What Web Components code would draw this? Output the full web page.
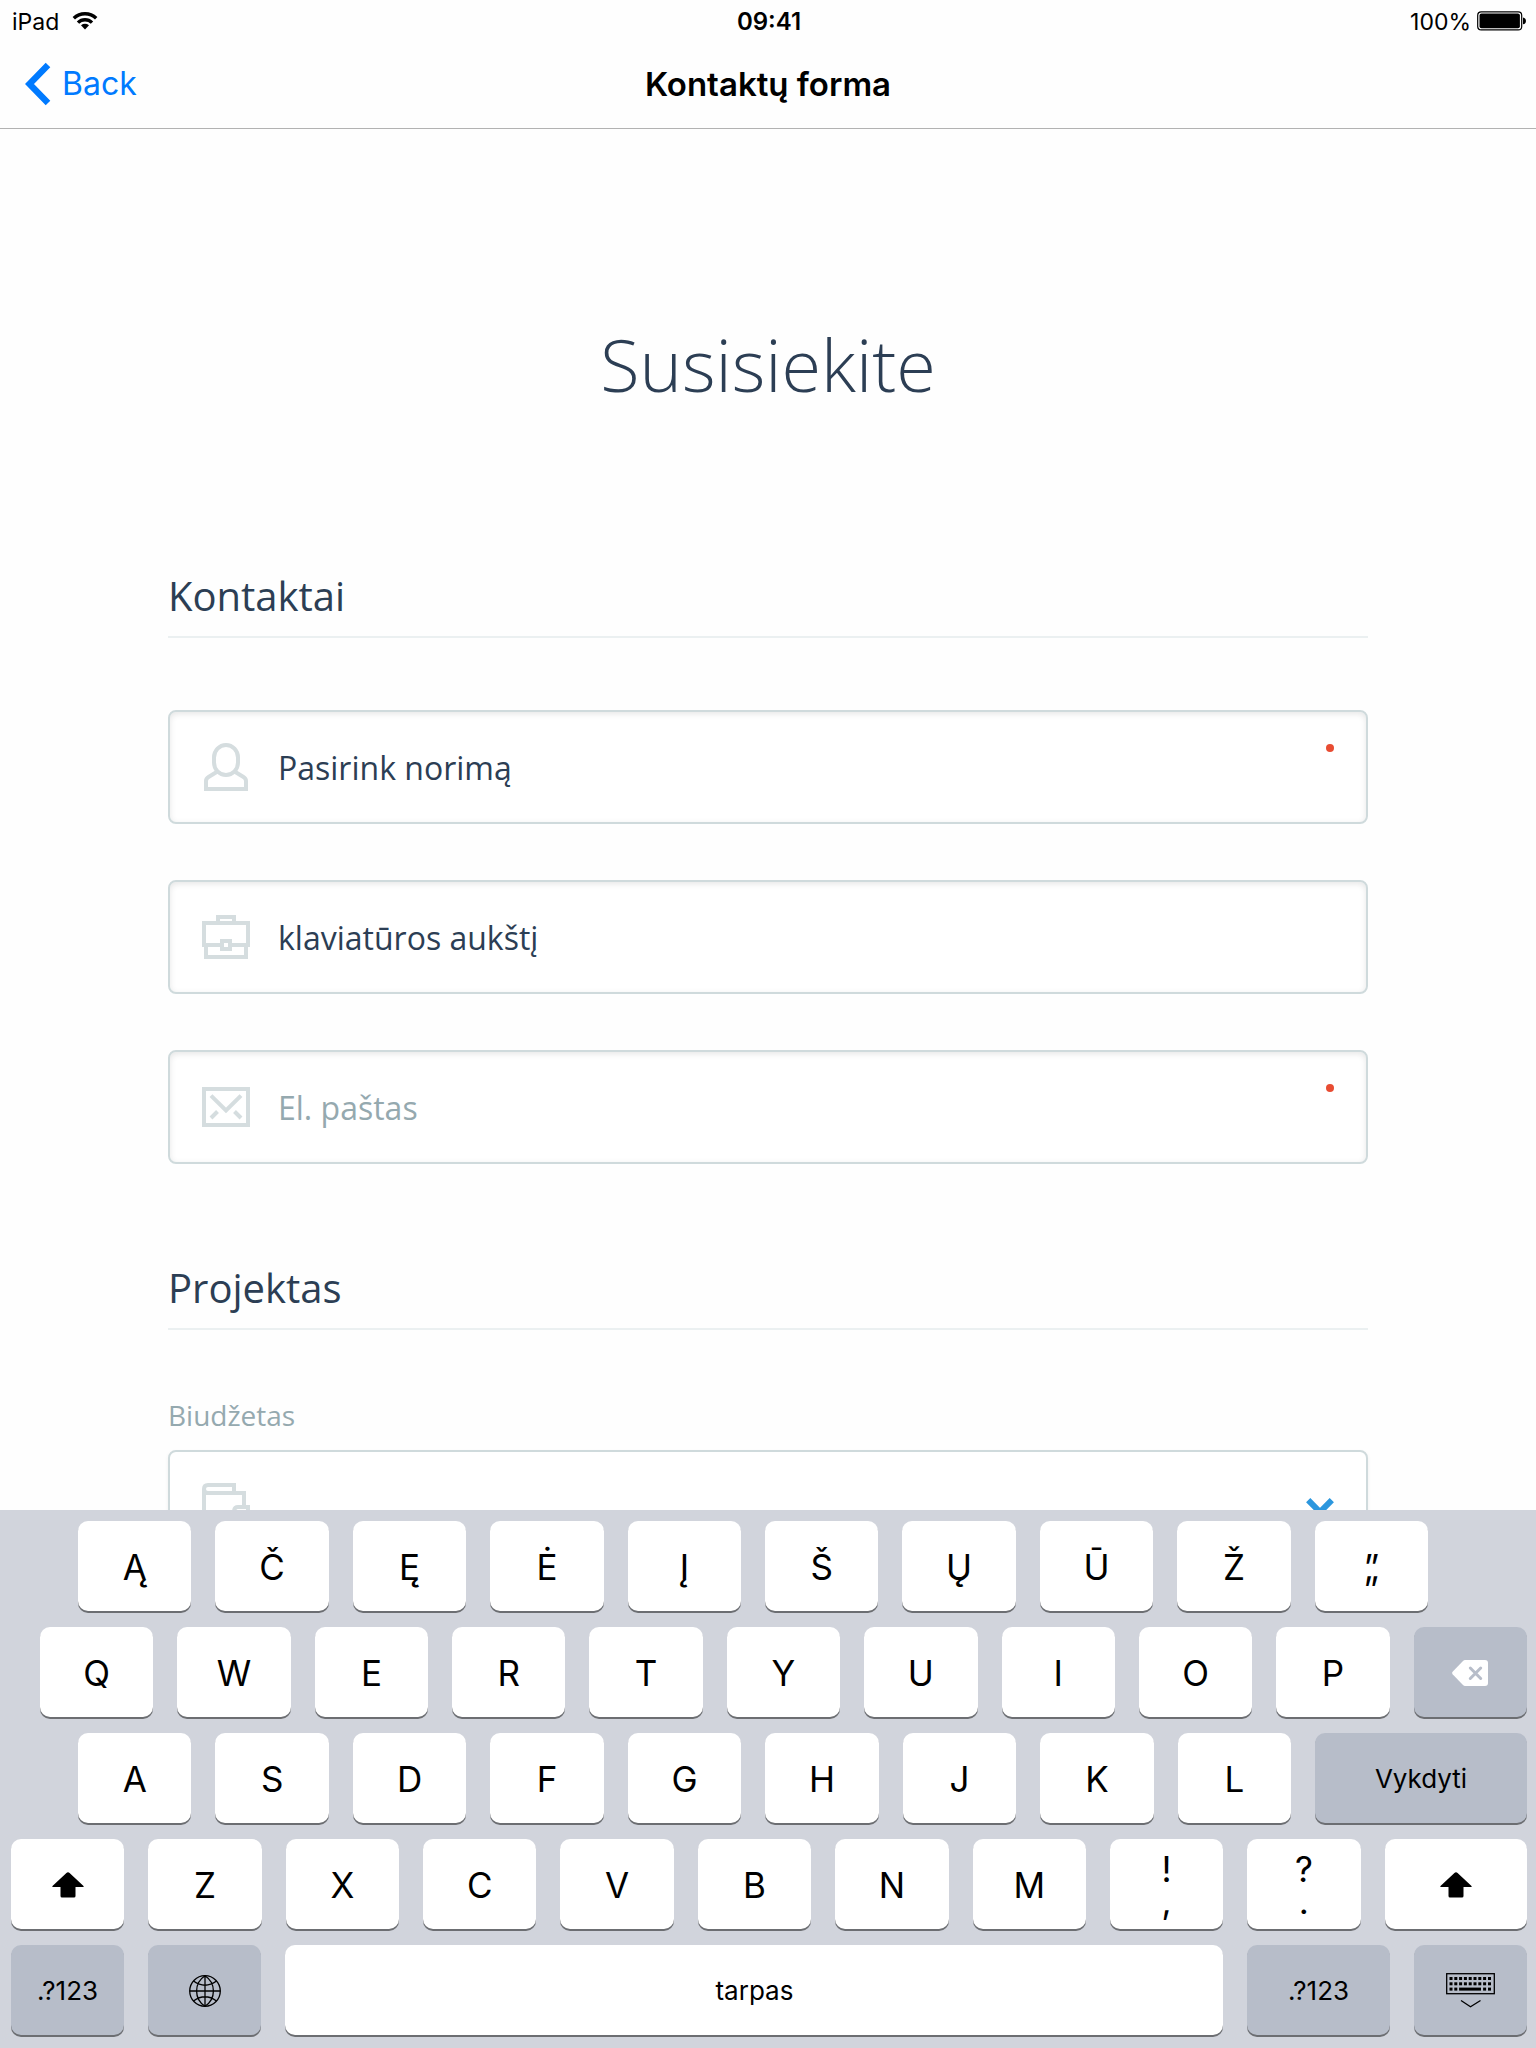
<!DOCTYPE html>
<html lang="lt">
<head>
<meta charset="utf-8">
<meta name="viewport" content="width=device-width, initial-scale=1">
<title>Kontaktų forma</title>
<style>
  html, body { margin: 0; height: 100%; background: #fefefe; }
  body { font-family: Inter, "Liberation Sans", sans-serif; color: #000; }
</style>
</head>
<body>
<app-screen>
  <status-bar slot="top" carrier="iPad" time="09:41" battery="100%"></status-bar>
  <nav-bar slot="top" back="Back">Kontaktų forma</nav-bar>
  <contact-form></contact-form>
  <key-board slot="bottom"></key-board>
</app-screen>

<script>
const define = (name, html, setup) => {
  const template = document.createElement('template');
  template.innerHTML = `<style>*{box-sizing:border-box}</style>${html}`;
  customElements.define(name, class extends HTMLElement {
    connectedCallback() {
      if (this.shadowRoot) return;
      const root = this.attachShadow({ mode: 'open' });
      root.append(template.content.cloneNode(true));
      if (setup) setup(this, root);
    }
  });
};

define('app-screen', `
  <style>
    :host { display: flex; flex-direction: column; height: 100vh; }
    main { flex: 1 1 0; min-height: 0; overflow: hidden; }
  </style>
  <slot name="top"></slot>
  <main><slot></slot></main>
  <slot name="bottom"></slot>`);

define('status-bar', `
  <style>
    :host { display: grid; grid-template-columns: 1fr auto 1fr; align-items: center; height: 40px; padding: 0 10px 0 12px; font-size: 24px; line-height: 40px; }
    .left, .right { display: flex; align-items: center; font-size: 23px; }
    .left { gap: 13px; }
    .right { justify-content: flex-end; gap: 6px; }
    .time { font-weight: 600; }
    span { padding-top: 2px; }
    svg { display: block; }
  </style>
  <div class="left"><span class="carrier"></span>
    <svg width="26" height="20" viewBox="0 0 26 20" fill="none" stroke="#000" stroke-width="3.4">
      <path d="M1.8 7.3a16 16 0 0 1 22.4 0"/><path d="M6 11.6a10 10 0 0 1 14 0"/>
      <path d="M9 14.2q4-2.8 8 0L13 18.6z" fill="#000" stroke="none"/>
    </svg></div>
  <span class="time"></span>
  <div class="right"><span class="battery"></span>
    <svg width="49" height="20" viewBox="0 0 49 20">
      <rect x=".7" y=".9" width="44" height="18" rx="3.5" fill="none" stroke="#000" stroke-width="1.2"/>
      <rect x="2.5" y="2.6" width="40.4" height="14.6" rx="2" fill="#000"/>
      <path d="M46 6.5q3 .6 3 3.4t-3 3.4z" fill="#000"/>
    </svg></div>`,
  (el, root) => {
    for (const k of ['carrier', 'time', 'battery']) root.querySelector('.' + k).textContent = el.getAttribute(k);
  });

define('nav-bar', `
  <style>
    :host { display: grid; grid-template-columns: 1fr auto 1fr; align-items: center; height: 88px; padding: 0 24px; border-bottom: 1px solid #b2b2b2; line-height: 44px; }
    a { display: flex; align-items: center; gap: 11px; color: #007aff; text-decoration: none; justify-self: start; font-size: 32px; }
    h1 { margin: 0; font-size: 33px; line-height: 44px; font-weight: 600; }
    svg { display: block; }
  </style>
  <a href="#"><svg width="27" height="44" viewBox="0 0 27 44" fill="none" stroke="#007aff" stroke-width="6.4"><path d="M24 3 5.500 22 24 41"/></svg><span></span></a>
  <h1><slot></slot></h1>`,
  (el, root) => { root.querySelector('span').textContent = el.getAttribute('back'); });

/* Line icons for the form fields, drawn on a 48 unit grid */
const fieldIcons = {
  user: '<rect x="12" y="2" width="24" height="30" rx="12" ry="12.500"/><path d="M15.500 28.500 6.500 34Q4 35.500 4 38V46H44V38Q44 35.500 41.500 34L32.500 28.500"/>',
  briefcase: '<path d="M16 10V4H32V10"/><path d="M2 34V10H46V34M0 32H20M28 32H48"/><path d="M4 34V44H44V34"/><rect x="20" y="28" width="8" height="8"/>',
  mail: '<rect x="2" y="6" width="44" height="36"/><path d="M9 12.700 24 27.500 39 12.700M15.500 28.500 9 35M32.500 28.500 39 35"/>',
  wallet: '<path d="M32 10V2H6Q2 2 2 6T6 10H42V24M2 6V42Q2 46 6 46H42V34M48 24H36Q32 24 32 29T36 34H46V24"/>'
};

define('field-icon', `
  <style>:host { display: block; flex: none; } svg { display: block; }</style>
  <svg width="48" height="48" viewBox="0 0 48 48" fill="none" stroke="#d5dddf" stroke-width="4"></svg>`,
  (el, root) => { root.querySelector('svg').innerHTML = fieldIcons[el.getAttribute('name')] || ''; });

define('form-section', `
  <style>
    :host { display: block; }
    h2 { margin: 0; padding-bottom: 12px; border-bottom: 2px solid #ebf0f1; font-size: 40px; line-height: 56px; font-weight: 400; }
  </style>
  <h2></h2><slot></slot>`,
  (el, root) => { root.querySelector('h2').textContent = el.getAttribute('heading'); });

define('text-field', `
  <style>
    :host { display: block; }
    .box { display: flex; align-items: center; height: 114px; padding: 0 32px; border: 2px solid #cfdadc; border-radius: 8px; background: #fff; box-shadow: inset 0 2px 6px rgba(0,0,0,.1); }
    input { flex: 1; min-width: 0; height: 64px; margin-left: 28px; padding: 0; border: 0; outline: 0; background: none; font: inherit; font-size: 32px; color: #2c3e54; }
    input::placeholder { color: #95a9af; opacity: 1; }
    .dot { align-self: flex-start; width: 8px; height: 8px; margin-top: 32px; border-radius: 50%; background: #e84c32; }
  </style>
  <div class="box"><field-icon></field-icon><input></div>`,
  (el, root) => {
    const input = root.querySelector('input');
    input.type = el.getAttribute('type') || 'text';
    input.value = el.getAttribute('value') || '';
    input.placeholder = el.getAttribute('placeholder') || '';
    input.setAttribute('aria-label', el.getAttribute('name'));
    if (el.hasAttribute('required')) {
      input.required = true;
      const dot = document.createElement('span');
      dot.className = 'dot';
      input.after(dot);
    }
    const icon = root.querySelector('field-icon').shadowRoot;
    icon.querySelector('svg').innerHTML = fieldIcons[el.getAttribute('icon')];
  });

define('select-field', `
  <style>
    :host { display: block; }
    label { display: block; margin-bottom: 16px; font-size: 28px; line-height: 38px; color: #95a9af; }
    .box { display: flex; align-items: center; height: 114px; padding: 0 32px; border: 2px solid #cfdadc; border-radius: 8px; background: #fff; box-shadow: 0 2px 4px rgba(0,0,0,.06); }
    select { flex: 1; min-width: 0; height: 64px; margin-left: 28px; border: 0; outline: 0; appearance: none; background: none; font: inherit; font-size: 32px; color: #2c3e54; }
    svg { display: block; flex: none; }
  </style>
  <label for="choice"></label>
  <div class="box"><field-icon name="wallet"></field-icon><select id="choice"><option></option></select>
    <svg width="28" height="18" viewBox="0 0 28 18" fill="none" stroke="#2c97de" stroke-width="6"><path d="M2.200 2.200 14 14 25.800 2.200"/></svg></div>`,
  (el, root) => { root.querySelector('label').textContent = el.getAttribute('label'); });

define('contact-form', `
  <style>
    :host { display: block; padding: 186px 168px 96px; font-family: "Open Sans", "Noto Sans", sans-serif; color: #2c3e54; }
    h1 { margin: 0 0 155px; font-size: 72px; line-height: 98px; font-weight: 300; text-align: center; }
    form { display: flex; flex-direction: column; gap: 96px; }
    .fields { display: flex; flex-direction: column; gap: 56px; padding-top: 72px; }
    .budget { padding-top: 66px; }
  </style>
  <h1>Susisiekite</h1>
  <form>
    <form-section heading="Kontaktai"><div class="fields">
      <text-field icon="user" name="Vardas" value="Pasirink norimą" required></text-field>
      <text-field icon="briefcase" name="Įmonė" value="klaviatūros aukštį"></text-field>
      <text-field icon="mail" name="El. paštas" type="email" placeholder="El. paštas" required></text-field>
    </div></form-section>
    <form-section heading="Projektas"><div class="budget">
      <select-field label="Biudžetas"></select-field>
    </div></form-section>
  </form>`);

/* Keyboard glyphs */
const dots = (y, xs) => xs.map(x => `<rect x="${x}" y="${y}" width="3" height="3"/>`).join('');
const cols = [3.5, 8.300, 13.100, 17.900, 22.700, 27.500, 32.300, 37.100, 42];
const keyIcons = {
  shift: '<svg width="32" height="26" viewBox="0 0 32 26"><path d="M16 .3q.8 0 1.600.7L31.500 14q.8 1-.5 1H23.500V24q0 1.500-1.500 1.500H10Q8.500 25.500 8.500 24V15H1Q-.3 15 .5 14L14.400 1Q15.200.3 16 .3z"/></svg>',
  del: '<svg width="36" height="26" viewBox="0 0 36 26"><path d="M13 0H33q3 0 3 3V23q0 3-3 3H13q-1 0-2-1L.6 14.200Q-.4 13 .6 11.800L11 1Q12 0 13 0z" fill="#fff"/><path d="M18.300 8 28.700 18.500M28.700 8 18.300 18.500" stroke="#b7bdc9" stroke-width="3" stroke-linecap="round"/></svg>',
  globe: '<svg width="32" height="32" viewBox="0 0 32 32" fill="none" stroke="#000" stroke-width="1.300"><circle cx="16" cy="16" r="15.300"/><path d="M16 .7V31.300M.7 16H31.300M16 .7C4.800 8 4.800 24 16 31.300M16 .7C27.200 8 27.200 24 16 31.300M4.500 6Q16 14.500 27.500 6M4.500 26Q16 17.500 27.500 26"/></svg>',
  hide: `<svg width="50" height="36" viewBox="-1 0 50 36"><rect x=".7" y=".7" width="47.600" height="20" fill="none" stroke="#000" stroke-width="1.300"/>${dots(4, cols)}${dots(9.300, cols)}${dots(14.600, [3.5, 8.300, 37.100, 42])}<path d="M13.100 14.600H35V17.600H13.100z"/><path d="M15 27.500 24.500 33.800 34.500 27.500" fill="none" stroke="#000" stroke-width="1.300"/></svg>`
};

define('key-cap', `
  <style>
    :host { display: block; flex: var(--units, 113) 1 0; min-width: 0; }
    button { display: grid; place-content: center; justify-items: center; width: 100%; height: 90px; margin: 0; padding: 2px 0 0; border: 0; border-radius: 10px; background: #fff; box-shadow: 0 2px 0 #6c6e72; color: #000; font: inherit; font-size: 35px; line-height: 32px; }
    :host([word]) button { font-size: 26px; }
    :host([dark]) button { background: #b7bdc9; }
    :host([overlap]) span { grid-area: 1 / 1; }
    svg { display: block; }
  </style>
  <button type="button"></button>`,
  (el, root) => {
    const button = root.querySelector('button');
    if (el.hasAttribute('icon')) {
      button.innerHTML = keyIcons[el.getAttribute('icon')];
      button.setAttribute('aria-label', el.getAttribute('icon'));
      return;
    }
    for (const text of el.getAttribute('legend').split(' ')) {
      const span = document.createElement('span');
      span.textContent = text;
      button.append(span);
    }
  });

const letters = text => [...text].map(c => `<key-cap legend="${c}"></key-cap>`).join('');

define('key-board', `
  <style>
    :host { display: flex; flex-direction: column; gap: 16px; padding: 11px 9px 13px 11px; background: #d1d4dc; }
    .row { display: flex; gap: 24px; }
    .accents { padding: 0 99px 0 67px; }
    .upper { padding-left: 29px; }
    .home { padding-left: 67px; }
    .enter { --units: 211; }
    .wide { --units: 142; }
    .space { --units: 936; }
  </style>
  <div class="row accents">${letters('ĄČĘĖĮŠŲŪŽ')}<key-cap legend="” „" overlap></key-cap></div>
  <div class="row upper">${letters('QWERTYUIOP')}<key-cap icon="del" dark></key-cap></div>
  <div class="row home">${letters('ASDFGHJKL')}<key-cap class="enter" legend="Vykdyti" word dark></key-cap></div>
  <div class="row"><key-cap icon="shift"></key-cap>${letters('ZXCVBNM')}<key-cap legend="! ,"></key-cap><key-cap legend="? ."></key-cap><key-cap class="wide" icon="shift"></key-cap></div>
  <div class="row"><key-cap legend=".?123" word dark></key-cap><key-cap icon="globe" dark></key-cap><key-cap class="space" legend="tarpas" word></key-cap><key-cap class="wide" legend=".?123" word dark></key-cap><key-cap icon="hide" dark></key-cap></div>`);
</script>
</body>
</html>
